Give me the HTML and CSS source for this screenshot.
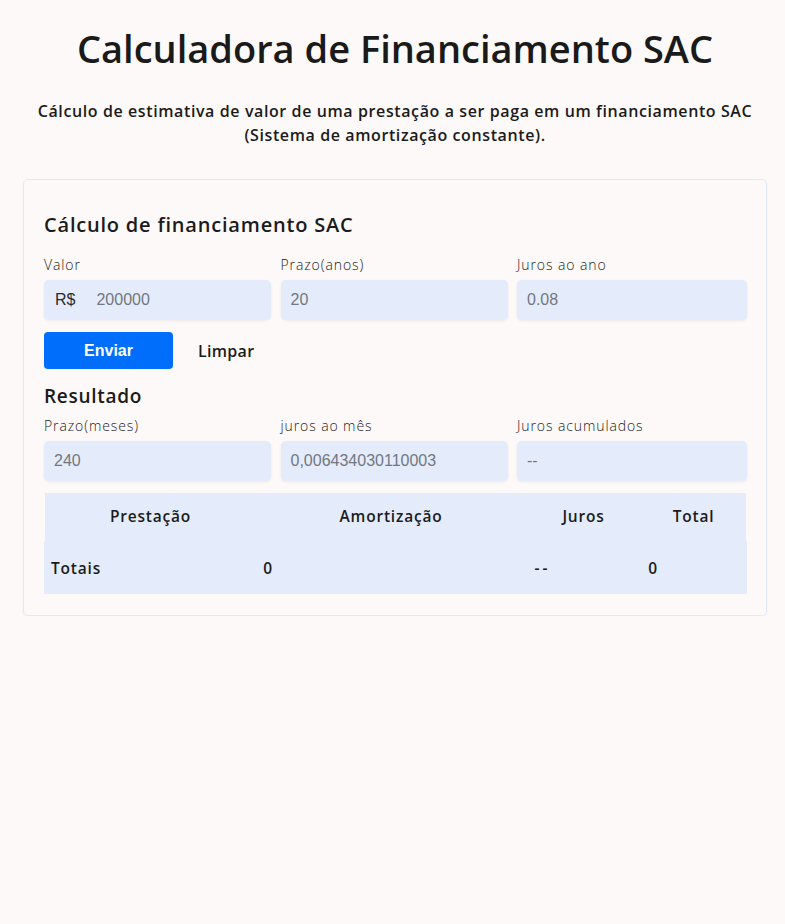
FILE: index.html
```html
<!DOCTYPE html>
<html lang="pt-BR">
<head>
<meta charset="utf-8">
<title>Calculadora de Financiamento SAC</title>
<link rel="stylesheet" href="styles.css">
</head>
<body>
<main class="page">
  <h1 class="title">Calculadora de Financiamento SAC</h1>
  <p class="subtitle">Cálculo de estimativa de valor de uma prestação a ser paga em um financiamento SAC<br>(Sistema de amortização constante).</p>
  <section class="card">
    <h2 class="card-title">Cálculo de financiamento SAC</h2>
    <div class="fields">
      <div class="field">
        <span class="label">Valor</span>
        <div class="control">
          <span class="addon">R$</span>
          <span class="placeholder">200000</span>
        </div>
      </div>
      <div class="field">
        <span class="label">Prazo(anos)</span>
        <div class="control"><span class="placeholder">20</span></div>
      </div>
      <div class="field">
        <span class="label">Juros ao ano</span>
        <div class="control"><span class="placeholder">0.08</span></div>
      </div>
    </div>
    <div class="actions">
      <button class="btn-primary" type="button">Enviar</button>
      <button class="btn-link" type="button">Limpar</button>
    </div>
    <h3 class="result-title">Resultado</h3>
    <div class="fields fields-result">
      <div class="field">
        <span class="label">Prazo(meses)</span>
        <div class="control"><span class="placeholder">240</span></div>
      </div>
      <div class="field">
        <span class="label">juros ao mês</span>
        <div class="control"><span class="placeholder">0,006434030110003</span></div>
      </div>
      <div class="field">
        <span class="label">Juros acumulados</span>
        <div class="control"><span class="placeholder">--</span></div>
      </div>
    </div>
    <div class="table">
      <div class="thead">
        <span class="th">Prestação</span>
        <span class="th">Amortização</span>
        <span class="th">Juros</span>
        <span class="th">Total</span>
      </div>
      <div class="tfoot">
        <span class="td td-label">Totais</span>
        <span class="td">0</span>
        <span class="td"></span>
        <span class="td td-dash">--</span>
        <span class="td">0</span>
      </div>
    </div>
  </section>
</main>
</body>
</html>
```

FILE: styles.css
```css
* { box-sizing: border-box; }

html, body {
  margin: 0;
  padding: 0;
  background: #fdf9f8;
}

body {
  font-family: "Open Sans", "Noto Sans", sans-serif;
  color: #1b1b1b;
}

.page {
  width: 744px;
  margin-left: 23px;
  display: flex;
  flex-direction: column;
}

.title {
  margin: 24px 0 0;
  font-size: 38px;
  line-height: 48px;
  font-weight: 600;
  text-align: center;
  color: #1a1a1a;
}

.subtitle {
  margin: 27px 0 0;
  font-size: 16px;
  line-height: 24px;
  font-weight: 600;
  letter-spacing: 0.6px;
  text-align: center;
  color: #1b1b1b;
}

.card {
  margin-top: 32px;
  border: 1px solid #e1e9f6;
  border-radius: 5px;
  box-shadow: 0 2px 3px rgba(0, 0, 0, 0.04);
  padding: 33px 19px 21px 20px;
}

.card-title {
  margin: 0;
  font-size: 20px;
  line-height: 24px;
  font-weight: 600;
  letter-spacing: 0.8px;
}

.fields {
  display: grid;
  grid-template-columns: 227px 227px 1fr;
  column-gap: 9.5px;
  margin-top: 18px;
}

.fields-result { margin-top: 8px; }

.field {
  display: flex;
  flex-direction: column;
  gap: 5px;
}

.label {
  font-size: 14px;
  line-height: 20px;
  font-weight: 300;
  letter-spacing: 0.9px;
  color: #222;
}

.control {
  height: 40px;
  display: flex;
  align-items: center;
  gap: 21px;
  padding: 0 10px;
  background: #e4ecfb;
  border-radius: 5px;
  box-shadow: 0 1px 3px rgba(0, 0, 0, 0.07);
  font-family: "Liberation Sans", Arial, sans-serif;
  font-size: 16px;
}

.addon {
  color: #2a2a2a;
  padding-left: 1px;
}

.placeholder {
  color: #727780;
}

.actions {
  display: flex;
  align-items: center;
  margin-top: 12px;
}

.btn-primary {
  width: 129px;
  height: 37px;
  border: 0;
  border-radius: 4px;
  background: #006dfb;
  color: #fff;
  font-family: "Liberation Sans", Arial, sans-serif;
  font-weight: 700;
  font-size: 16px;
}

.btn-link {
  border: 0;
  background: none;
  padding: 0 0 0 25px;
  font-family: "Open Sans", sans-serif;
  font-size: 16px;
  font-weight: 600;
  letter-spacing: 0.3px;
  color: #1b1b1b;
}

.result-title {
  margin: 15px 0 0;
  font-size: 19px;
  line-height: 24px;
  font-weight: 600;
  letter-spacing: 0.7px;
}

.table {
  margin-top: 12px;
  display: flex;
  flex-direction: column;
}

.thead {
  display: grid;
  grid-template-columns: 211px 270px 115px 1fr;
  height: 48px;
  margin: 0 1px;
  background: #e4ecfb;
  align-items: center;
}

.th {
  text-align: center;
  font-size: 15.5px;
  font-weight: 600;
  letter-spacing: 0.8px;
  color: #1b1b1b;
  padding-bottom: 3px;
}

.tfoot {
  display: grid;
  grid-template-columns: 190px 68px 199px 80px 144px;
  height: 53px;
  background: #e4ecfb;
  align-items: center;
}

.td {
  text-align: center;
  font-size: 15.5px;
  font-weight: 600;
  letter-spacing: 0.8px;
  color: #1b1b1b;
}

.td-dash {
  letter-spacing: 3px;
  padding-left: 3px;
}

.td-label {
  text-align: left;
  padding-left: 7px;
}
```
